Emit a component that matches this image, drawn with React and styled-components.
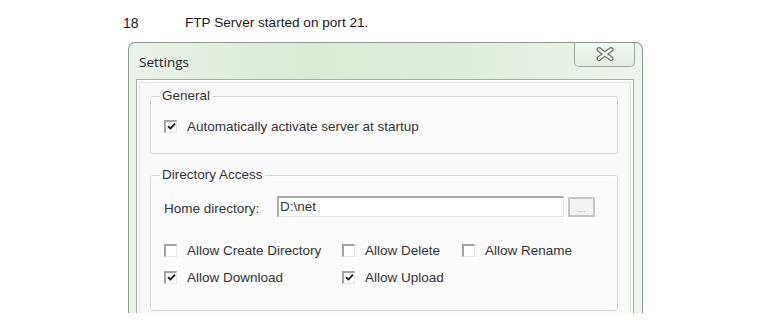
import React from 'react';
import styled, { createGlobalStyle } from 'styled-components';

const GlobalStyle = createGlobalStyle`
  html, body {
    margin: 0;
    padding: 0;
    background: #ffffff;
  }
  body {
    width: 770px;
    height: 330px;
    overflow: hidden;
    font-family: "Liberation Sans", Arial, sans-serif;
  }
  * {
    box-sizing: border-box;
  }
`

const Page = styled.div`
  padding-top: 15px;
`

const LogLine = styled.div`
  display: flex;
  align-items: center;
  padding-left: 123px;
  height: 16px;
  font-size: 14px;
  line-height: 16px;
  color: #1a1a1a;
`
const LogId = styled.span`
  display: inline-block;
  width: 16px;
  white-space: nowrap;
`
const LogText = styled.span`
  margin-left: 46px;
  font-size: 13.6px;
`

const Window = styled.div`
  margin: 11px 0 0 128px;
  width: 515px;
  height: 271px;
  overflow: hidden;
  border: 1px solid #8a9a8e;
  border-bottom: none;
  border-radius: 7px 7px 0 0;
  padding: 0 8px 0 7px;
  background: linear-gradient(to right, #eaf3e8 0%, #d9ebd5 35%, #dfeedc 65%, #edf5ec 100%);
`

const TitleBar = styled.div`
  display: flex;
  height: 36px;
`
const Title = styled.div`
  font-family: "Open Sans", "Noto Sans", sans-serif;
  font-size: 13.5px;
  color: #1e1e1e;
  padding: 10px 0 0 3px;
`
const CloseButton = styled.div`
  margin-left: auto;
  margin-top: -1px;
  margin-right: -1px;
  width: 61px;
  height: 25px;
  display: flex;
  align-items: center;
  justify-content: center;
  border: 1px solid #97a89b;
  border-top: none;
  border-radius: 0 0 5px 5px;
  background: linear-gradient(#f4f9f3, #e3eee1);
`

const Client = styled.div`
  height: 100%;
  border: 1px solid #a6aca8;
  border-bottom: none;
  background: #f9f9f9;
  box-shadow: inset 0 0 0 2px #ffffff, inset 0 0 0 3px #e2e2e2;
  padding: 8px 15px 0 13px;
`

const Group = styled.fieldset`
  margin: ${p => p.$top || 0}px 0 0 0;
  border: 1px solid #d3d6d8;
  border-radius: 3px;
  padding: 13px 12px ${p => p.$bottom || 18}px 13px;
  min-width: 0;
  background: #fbfbfb;
  box-shadow: inset 1px 1px 0 #ffffff;
`
const Legend = styled.legend`
  font-size: 13.5px;
  line-height: 16px;
  color: #333;
  padding: 0 2px;
  margin-left: -4px;
`

const CheckRow = styled.label`
  display: flex;
  align-items: center;
  gap: 10px;
  height: 18px;
  font-size: 13.5px;
  color: #333;
  white-space: nowrap;
`
const Box = styled.span`
  width: 13px;
  height: 13px;
  display: flex;
  align-items: center;
  justify-content: center;
  border-style: solid;
  border-width: 2px 1px 1px 2px;
  border-color: #a3a3a3 #e8e8e8 #e8e8e8 #a3a3a3;
  background: #ffffff;
`

const HomeRow = styled.div`
  display: flex;
  align-items: center;
  gap: 4px;
`
const FieldLabel = styled.span`
  width: 109px;
  font-size: 13.5px;
  color: #333;
  padding-top: 4px;
`
const TextInput = styled.div`
  width: 287px;
  height: 21px;
  border-style: solid;
  border-width: 2px 1px 1px 2px;
  border-color: #a9a9a9 #e4e4e4 #e4e4e4 #a9a9a9;
  background: #ffffff;
  font-size: 13.5px;
  line-height: 18px;
  color: #333;
  padding-left: 1px;
`
const BrowseButton = styled.div`
  width: 27px;
  height: 20px;
  border: 2px solid #c4c4c4;
  background: #f3f3f3;
  font-size: 9px;
  color: #8a8a8a;
  text-align: center;
  line-height: 20px;
`

const CheckGrid = styled.div`
  display: grid;
  grid-template-columns: 178px 120px auto;
  row-gap: 9px;
  margin-top: 24px;
`

const Check = ({ checked, children }) => (
  <CheckRow>
    <Box>
      {checked && (
        <svg width="9" height="9" viewBox="0 0 9 9">
          <path d="M1 4.2 L3.4 6.6 L8 1.6" fill="none" stroke="#111" strokeWidth="1.7" />
        </svg>
      )}
    </Box>
    {children}
  </CheckRow>
)

const CloseGlyph = () => (
  <svg width="18" height="14" viewBox="0 0 18 14">
    <path d="M3 2.5 L15 11.5 M15 2.5 L3 11.5" stroke="#6b766e" strokeWidth="5" strokeLinecap="round" />
    <path d="M3 2.5 L15 11.5 M15 2.5 L3 11.5" stroke="#f4f6f4" strokeWidth="2.4" strokeLinecap="round" />
  </svg>
)

const App = () => {
  return (
    <Page>
      <GlobalStyle />
      <LogLine>
        <LogId>18</LogId>
        <LogText>FTP Server started on port 21.</LogText>
      </LogLine>
      <Window>
        <TitleBar>
          <Title>Settings</Title>
          <CloseButton><CloseGlyph /></CloseButton>
        </TitleBar>
        <Client>
          <Group>
            <Legend>General</Legend>
            <Check checked>Automatically activate server at startup</Check>
          </Group>
          <Group $top={13} $bottom={24}>
            <Legend>Directory Access</Legend>
            <HomeRow>
              <FieldLabel>Home directory:</FieldLabel>
              <TextInput>D:\net</TextInput>
              <BrowseButton>...</BrowseButton>
            </HomeRow>
            <CheckGrid>
              <Check>Allow Create Directory</Check>
              <Check>Allow Delete</Check>
              <Check>Allow Rename</Check>
              <Check checked>Allow Download</Check>
              <Check checked>Allow Upload</Check>
            </CheckGrid>
          </Group>
        </Client>
      </Window>
    </Page>
  )
}

export default App;
